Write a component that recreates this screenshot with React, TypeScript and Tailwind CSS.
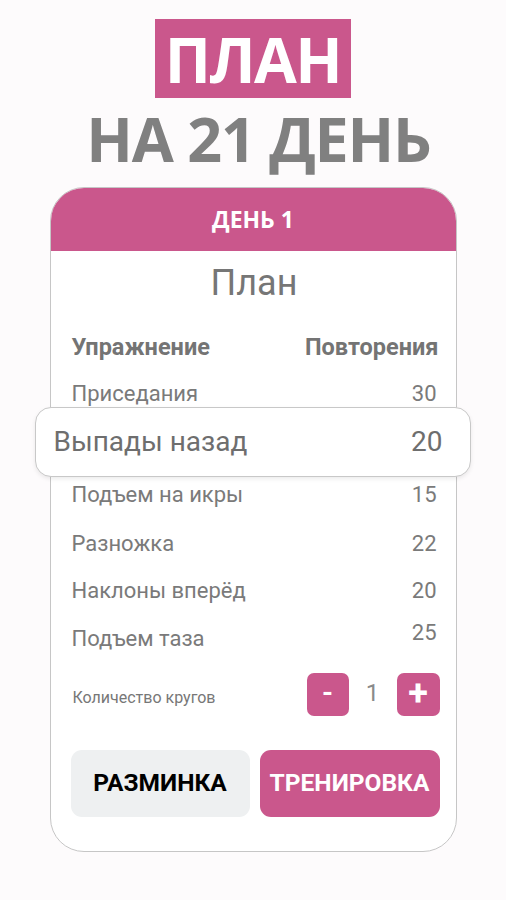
import React from "react";

export default function App() {
  const pink = "bg-[#ca578c]";
  return (
    <div className="w-[506px] h-[900px] bg-[#fdfbfc] flex flex-col items-center overflow-hidden" style={{ fontFamily: "Roboto, 'Noto Sans', sans-serif" }}>
      <div className={`mt-[19px] w-[196px] h-[79px] ${pink} flex items-center justify-center`}>
        <span className="text-white font-bold text-[62px] leading-none tracking-[-1.5px]" style={{ fontFamily: "'Open Sans', sans-serif" }}>ПЛАН</span>
      </div>
      <div className="mt-[9px] h-[63px] pl-[11px] flex items-center justify-center text-[#808080] font-bold text-[61px] leading-none tracking-[-1.2px]" style={{ fontFamily: "'Open Sans', sans-serif" }}>
        НА 21 ДЕНЬ
      </div>
      <div className="mt-[17px] w-[407px] h-[665px] border border-[#c6c6c6] rounded-[34px] bg-white flex flex-col">
        <div className={`h-[63px] ${pink} rounded-t-[33px] flex items-center justify-center`}>
          <span className="text-white font-bold text-[23px] leading-none" style={{ fontFamily: "'Open Sans', sans-serif" }}>ДЕНЬ 1</span>
        </div>
        <div className="flex flex-col pl-[21px] pr-[19px]">
          <div className="h-[64px] flex items-center justify-center text-[#767676] text-[36px]">План</div>
          <div className="mt-[15px] h-[36px] flex items-center justify-between text-[#747474] font-bold text-[23.5px]">
            <span>Упражнение</span>
            <span className="-mr-[2px]">Повторения</span>
          </div>
          <div className="mt-[13px] h-[28px] flex items-center justify-between text-[#7a7a7a] text-[22px]">
            <span>Приседания</span>
            <span>30</span>
          </div>
          <div className="h-[70px] -ml-[37px] -mr-[34px] pl-[18px] pr-[27px] bg-white border border-[#c8c8c8] rounded-[16px] shadow-[0_2px_4px_rgba(0,0,0,0.08)] flex items-center justify-between text-[#6e6e6e] text-[28px]">
            <span>Выпады назад</span>
            <span>20</span>
          </div>
          <div className="h-[34px] flex items-center justify-between text-[#7a7a7a] text-[22px]">
            <span>Подъем на икры</span>
            <span>15</span>
          </div>
          <div className="mt-[15px] h-[34px] flex items-center justify-between text-[#7a7a7a] text-[22px]">
            <span>Разножка</span>
            <span>22</span>
          </div>
          <div className="mt-[13px] h-[34px] flex items-center justify-between text-[#7a7a7a] text-[22px]">
            <span>Наклоны вперёд</span>
            <span>20</span>
          </div>
          <div className="mt-[14px] h-[34px] flex items-center justify-between text-[#7a7a7a] text-[22px]">
            <span>Подъем таза</span>
            <span className="mb-[12px]">25</span>
          </div>
          <div className="mt-[18px] h-[43px] flex items-center justify-between">
            <span className="text-[#777] text-[16px] pl-[1px] mt-[6px]">Количество кругов</span>
            <div className="flex items-center -mr-[3px]">
              <div className={`w-[42px] h-[43px] ${pink} rounded-[7px] flex items-center justify-center text-white font-bold text-[28px] leading-none pb-[3px]`}>-</div>
              <div className="w-[48px] text-center text-[#8a8a8a] text-[24px] mb-[4px]">1</div>
              <div className={`w-[43px] h-[43px] ${pink} rounded-[7px] flex items-center justify-center text-white font-bold text-[36px] leading-none pb-[3px]`}>+</div>
            </div>
          </div>
          <div className="mt-[34px] h-[67px] flex gap-[10px] -ml-[1px] -mr-[3px]">
            <div className="w-[179px] h-full bg-[#eef0f1] rounded-[11px] flex items-center justify-center text-black font-bold text-[24.5px]">РАЗМИНКА</div>
            <div className={`w-[180px] h-full ${pink} rounded-[11px] flex items-center justify-center text-white font-bold text-[24.5px]`}>ТРЕНИРОВКА</div>
          </div>
        </div>
      </div>
    </div>
  );
}
